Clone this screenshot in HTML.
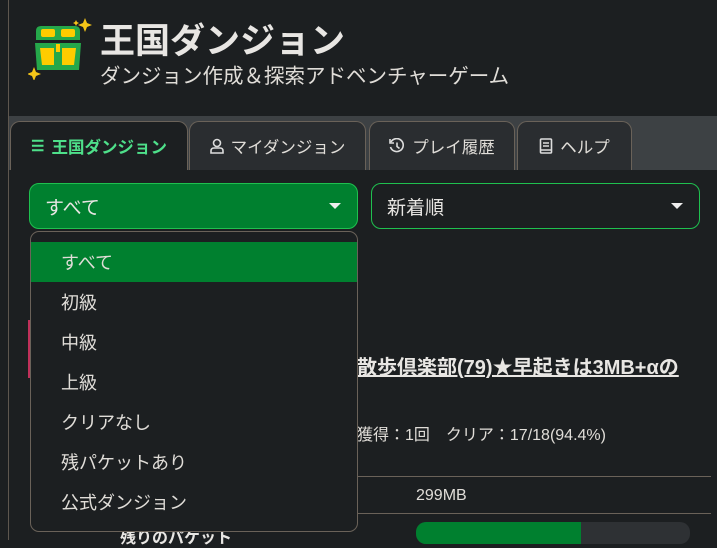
<!DOCTYPE html>
<html><head><meta charset="utf-8"><style>
*{box-sizing:border-box;margin:0;padding:0}
body{width:717px;height:540px;overflow:hidden;background:#1c1f21;font-family:"Liberation Sans","Noto Sans CJK JP",sans-serif;color:#e8e6e3;position:relative}
.vl{position:absolute;left:8px;top:0;width:1px;height:540px;background:#5e574f}
.abs{position:absolute}
.tabbar{position:absolute;left:9px;top:116px;width:708px;height:54px;background:#3d4144}
.tab{position:absolute;top:5px;height:49px;border:1px solid #6a6259;border-bottom:none;border-radius:10px 10px 0 0;background:#2a2d30;font-size:16.5px;display:flex;align-items:center;justify-content:center;gap:7px;color:#e0ddd8}
.sel{position:absolute;top:183px;height:46px;border:1px solid #1fc04f;border-radius:10px;font-size:19px;padding-left:15px;display:flex;align-items:center}
.caret{position:absolute;right:16px;top:19px;width:0;height:0;border-left:6px solid transparent;border-right:6px solid transparent;border-top:6px solid #eee}
.menu{position:absolute;left:30px;top:231px;width:328px;height:301px;border:1px solid #6a6259;border-radius:9px;background:#1c1f21}
.it{height:40px;line-height:43px;padding-left:30px;font-size:18px;color:#e0ddd8}
</style></head><body>
<div class="vl"></div>
<svg class="abs" style="left:28px;top:16px" width="64" height="64" viewBox="0 0 64 64">
<path d="M57 2 l2 5 5 2 -5 2 -2 5 -2 -5 -5 -2 5 -2z" fill="#f5c518"/>
<path d="M48 4 l1 2 2 1 -2 1 -1 2 -1 -2 -2 -1 2 -1z" fill="#f5c518"/>
<path d="M6 51 l2 5 5 2 -5 2 -2 5 -2 -5 -5 -2 5 -2z" fill="#f5c518"/>
<path d="M8 15 q0 -5 5 -5 h34 q5 0 5 5 v9 h-44z" fill="#25a84a"/>
<rect x="13" y="13" width="14" height="8" rx="2" fill="#ffcc00"/><rect x="33" y="13" width="14" height="8" rx="2" fill="#ffcc00"/>
<path d="M7 27 h46 l-2 27 h-42z" fill="#25a84a"/>
<path d="M12 32 h14 v17 h-12z M34 32 h14 l-2 17 h-12z" fill="#ffcc00"/>
<rect x="28" y="28" width="4" height="8" fill="#ffcc00"/>
</svg>
<div class="abs" style="left:100px;top:13px;font-size:35px;font-weight:bold;color:#e8e6e3">王国ダンジョン</div>
<div class="abs" style="left:100px;top:59px;font-size:20.5px;color:#e0ddd8">ダンジョン作成＆探索アドベンチャーゲーム</div>
<div class="tabbar">
<div class="tab" style="left:1px;width:178px;background:#1c1f21;color:#4ee08a;font-weight:bold"><span style="font-size:15px">☰</span>王国ダンジョン</div>
<div class="tab" style="left:180px;width:177px"><svg width="14" height="16" viewBox="0 0 14 16" fill="none" stroke="#ddd" stroke-width="1.6"><circle cx="7" cy="5" r="3.5"/><path d="M1 15 v-2 q0 -3 3 -3 h6 q3 0 3 3 v2z"/></svg>マイダンジョン</div>
<div class="tab" style="left:360px;width:146px"><svg width="16" height="16" viewBox="0 0 16 16" fill="none" stroke="#ddd" stroke-width="1.6"><path d="M2 4 a6.5 6.5 0 1 1 -0.5 5"/><path d="M1 1 v4 h4"/><path d="M8 4.5 v4 l2.5 2"/></svg>プレイ履歴</div>
<div class="tab" style="left:508px;width:115px"><svg width="14" height="16" viewBox="0 0 14 16" fill="none" stroke="#ddd" stroke-width="1.6"><rect x="1.5" y="1" width="11" height="14" rx="1"/><path d="M4 5 h6 M4 8 h6 M1.5 12 h11"/></svg>ヘルプ</div>
</div>
<div class="sel" style="left:29px;width:329px;background:#00802f">すべて<div class="caret"></div></div>
<div class="sel" style="left:371px;width:329px;background:#1c1f21">新着順<div class="caret"></div></div>
<div class="abs" style="left:28px;top:320px;width:2px;height:58px;background:#c0305a"></div>
<div class="abs" style="left:357px;top:351px;font-size:20px;font-weight:bold;text-decoration:underline;color:#e8e6e3">散歩倶楽部(79)★早起きは3MB+αの</div>
<div class="abs" style="left:357px;top:421px;font-size:16px;color:#e0ddd8">獲得：1回　クリア：17/18(94.4%)</div>
<div class="abs" style="left:357px;top:476px;width:354px;height:1px;background:#6a6259"></div>
<div class="abs" style="left:416px;top:487px;font-size:16px;color:#e0ddd8">299MB</div>
<div class="abs" style="left:357px;top:513px;width:354px;height:1px;background:#6a6259"></div>
<div class="abs" style="left:416px;top:522px;width:274px;height:22px;border-radius:10px;background:#2e3134;overflow:hidden"><div style="width:165px;height:100%;background:#00802f"></div></div>
<div class="abs" style="left:120px;top:524px;font-size:16px;font-weight:bold">残りのパケット</div>
<div class="menu">
<div style="height:10px"></div>
<div class="it" style="background:#00802f">すべて</div>
<div class="it">初級</div><div class="it">中級</div><div class="it">上級</div><div class="it">クリアなし</div><div class="it">残パケットあり</div><div class="it">公式ダンジョン</div>
</div>
</body></html>
